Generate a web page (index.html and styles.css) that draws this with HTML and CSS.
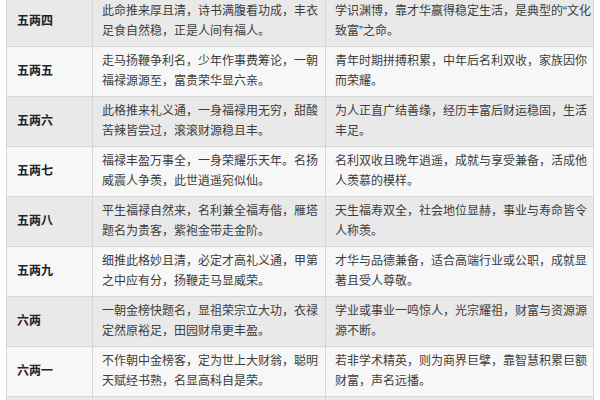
FILE: index.html
```html
<!DOCTYPE html>
<html lang="zh-CN">
<head>
<meta charset="utf-8">
<link rel="stylesheet" href="styles.css">
</head>
<body>
<div class="wrap">
<table class="fate">
  <colgroup>
    <col class="c-name">
    <col class="c-poem">
    <col class="c-note">
  </colgroup>
  <tbody>
    <tr class="odd">
      <td class="name">五两四</td>
      <td>此命推来厚且清，诗书满腹看功成，丰衣<br>足食自然稳，正是人间有福人。</td>
      <td>学识渊博，靠才华赢得稳定生活，是典型的“文化<br>致富”之命。</td>
    </tr>
    <tr class="even">
      <td class="name">五两五</td>
      <td>走马扬鞭争利名，少年作事费筹论，一朝<br>福禄源源至，富贵荣华显六亲。</td>
      <td>青年时期拼搏积累，中年后名利双收，家族因你<br>而荣耀。</td>
    </tr>
    <tr class="odd">
      <td class="name">五两六</td>
      <td>此格推来礼义通，一身福禄用无穷，甜酸<br>苦辣皆尝过，滚滚财源稳且丰。</td>
      <td>为人正直广结善缘，经历丰富后财运稳固，生活<br>丰足。</td>
    </tr>
    <tr class="even">
      <td class="name">五两七</td>
      <td>福禄丰盈万事全，一身荣耀乐天年。名扬<br>威震人争羡，此世逍遥宛似仙。</td>
      <td>名利双收且晚年逍遥，成就与享受兼备，活成他<br>人羡慕的模样。</td>
    </tr>
    <tr class="odd">
      <td class="name">五两八</td>
      <td>平生福禄自然来，名利兼全福寿偕，雁塔<br>题名为贵客，紫袍金带走金阶。</td>
      <td>天生福寿双全，社会地位显赫，事业与寿命皆令<br>人称羡。</td>
    </tr>
    <tr class="even">
      <td class="name">五两九</td>
      <td>细推此格妙且清，必定才高礼义通，甲第<br>之中应有分，扬鞭走马显威荣。</td>
      <td>才华与品德兼备，适合高端行业或公职，成就显<br>著且受人尊敬。</td>
    </tr>
    <tr class="odd">
      <td class="name">六两</td>
      <td>一朝金榜快题名，显祖荣宗立大功，衣禄<br>定然原裕足，田园财帛更丰盈。</td>
      <td>学业或事业一鸣惊人，光宗耀祖，财富与资源源<br>源不断。</td>
    </tr>
    <tr class="even">
      <td class="name">六两一</td>
      <td>不作朝中金榜客，定为世上大财翁，聪明<br>天赋经书熟，名显高科自是荣。</td>
      <td>若非学术精英，则为商界巨擘，靠智慧积累巨额<br>财富，声名远播。</td>
    </tr>
    <tr class="odd">
      <td class="name"></td>
      <td></td>
      <td></td>
    </tr>
  </tbody>
</table>
</div>
</body>
</html>
```

FILE: styles.css
```css
html, body {
  margin: 0;
  padding: 0;
  background: #ffffff;
}

body {
  width: 600px;
  height: 400px;
  overflow: hidden;
  font-family: "Liberation Sans", "Noto Sans CJK SC", sans-serif;
  font-size: 12px;
  color: #3d3d3d;
}

.wrap {
  padding-left: 6px;
  margin-top: -4px;
}

.fate {
  width: 587px;
  table-layout: fixed;
  border-collapse: collapse;
}

.c-name { width: 86px; }
.c-poem { width: 233px; }
.c-note { width: 268px; }

.fate td {
  border: 1px solid #d6d6d6;
  padding: 4px 8px 5px 9px;
  line-height: 20px;
  height: 40px;
  vertical-align: middle;
  white-space: nowrap;
  overflow: hidden;
}

.fate td.name {
  font-weight: bold;
  color: #222222;
  padding-left: 10px;
}

.fate tr.odd td {
  background: #e9e9e9;
}

.fate tr.even td {
  background: #f7f7f7;
}
```
